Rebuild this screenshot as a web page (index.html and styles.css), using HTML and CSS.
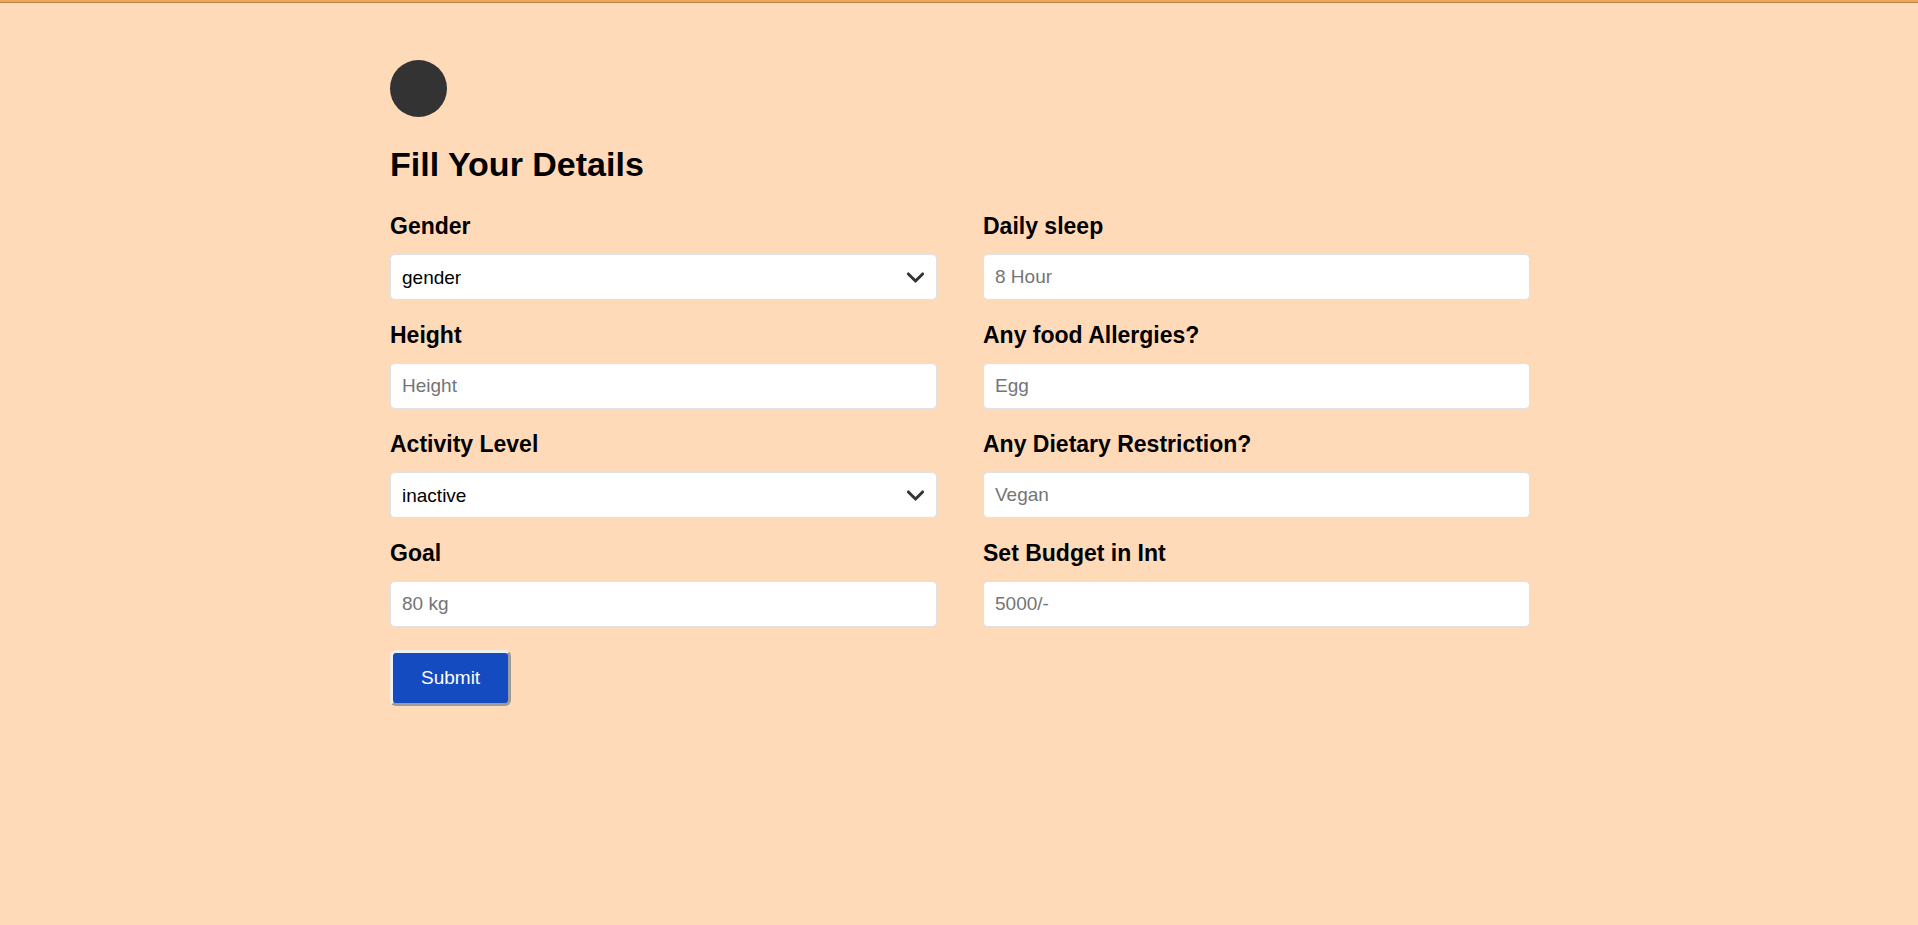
FILE: index.html
```html
<!DOCTYPE html>
<html lang="en">
<head>
  <meta charset="utf-8">
  <meta name="viewport" content="width=device-width, initial-scale=1">
  <title>Fill Your Details</title>
  <link rel="stylesheet" href="styles.css">
</head>
<body>
  <header class="topbar"></header>
  <main class="page">
    <div class="container">
      <div class="badge" aria-hidden="true"></div>
      <h1 class="title">Fill Your Details</h1>
      <form class="details">
        <div class="fields">
          <div class="field">
            <label class="label" for="gender">Gender</label>
            <select class="control select" id="gender">
              <option>gender</option>
              <option>male</option>
              <option>female</option>
            </select>
            <svg class="chevron" viewBox="0 0 16 16" aria-hidden="true"><path d="M2 5l6 6 6-6"/></svg>
          </div>
          <div class="field">
            <label class="label" for="sleep">Daily sleep</label>
            <input class="control" id="sleep" type="text" placeholder="8 Hour">
          </div>
          <div class="field">
            <label class="label" for="height">Height</label>
            <input class="control" id="height" type="text" placeholder="Height">
          </div>
          <div class="field">
            <label class="label" for="allergies">Any food Allergies?</label>
            <input class="control" id="allergies" type="text" placeholder="Egg">
          </div>
          <div class="field">
            <label class="label" for="activity">Activity Level</label>
            <select class="control select" id="activity">
              <option>inactive</option>
              <option>active</option>
            </select>
            <svg class="chevron" viewBox="0 0 16 16" aria-hidden="true"><path d="M2 5l6 6 6-6"/></svg>
          </div>
          <div class="field">
            <label class="label" for="diet">Any Dietary Restriction?</label>
            <input class="control" id="diet" type="text" placeholder="Vegan">
          </div>
          <div class="field">
            <label class="label" for="goal">Goal</label>
            <input class="control" id="goal" type="text" placeholder="80 kg">
          </div>
          <div class="field">
            <label class="label" for="budget">Set Budget in Int</label>
            <input class="control" id="budget" type="text" placeholder="5000/-">
          </div>
        </div>
        <button class="submit" type="submit">Submit</button>
      </form>
    </div>
  </main>
</body>
</html>
```
FILE: styles.css
```css
* {
  box-sizing: border-box;
}

html {
  background: #ffdab9;
}

body {
  margin: 0;
  color: #000;
  font-family: "Liberation Sans", Arial, sans-serif;
  font-size: 19px;
}

.topbar {
  height: 3px;
  background: #eba85d;
  border-bottom: 1px solid #b98145;
}

.page {
  padding: 57px 0 57px 2px;
}

.container {
  max-width: 1140px;
  margin: 0 auto;
}

.badge {
  width: 57px;
  height: 57px;
  border-radius: 50%;
  background: #333;
}

.title {
  margin: 27px 0 24px;
  font-size: 34px;
  line-height: 41px;
}

.fields {
  display: grid;
  grid-template-columns: 1fr 1fr;
  gap: 18px 46px;
}

.field {
  position: relative;
  display: flex;
  flex-direction: column;
  gap: 11px;
}

.label {
  font-size: 23px;
  font-weight: bold;
  line-height: 34px;
}

.control {
  width: 100%;
  height: 46px;
  padding: 0 11px;
  border: 1px solid #dee2e6;
  border-radius: 5px;
  background: #fff;
  color: #000;
  font: inherit;
}

.control::placeholder {
  color: #757575;
  opacity: 1;
}

.select {
  appearance: none;
  padding-right: 44px;
}

.chevron {
  position: absolute;
  right: 12px;
  bottom: 13px;
  width: 19px;
  height: 19px;
  fill: none;
  stroke: #333;
  stroke-width: 2.5;
  stroke-linecap: round;
  stroke-linejoin: round;
  pointer-events: none;
}

.submit {
  margin-top: 23px;
  padding: 14px 28px;
  border: 3px outset #efefef;
  border-radius: 6px;
  background: #144bc1;
  color: #fff;
  font: inherit;
  line-height: 22px;
}
```
